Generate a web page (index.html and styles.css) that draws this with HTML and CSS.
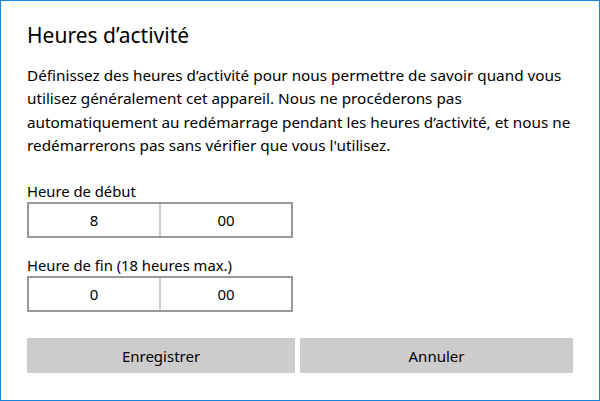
FILE: index.html
```html
<!DOCTYPE html>
<html lang="fr">

<head>
    <meta charset="UTF-8">
    <meta name="viewport" content="width=device-width, initial-scale=1.0">
    <title>Heures d'activité</title>
    <link rel="stylesheet" href="styles.css">
</head>

<body>
    <div class="dialog">
        <h1>Heures d’activité</h1>

        <p class="desc">Définissez des heures d’activité pour nous permettre de savoir quand vous<br>
            utilisez généralement cet appareil. Nous ne procéderons pas<br>
            automatiquement au redémarrage pendant les heures d’activité, et nous ne<br>
            redémarrerons pas sans vérifier que vous l'utilisez.</p>

        <p class="label first">Heure de début</p>
        <div class="time">
            <span>8</span>
            <span>00</span>
        </div>

        <p class="label">Heure de fin (18 heures max.)</p>
        <div class="time">
            <span>0</span>
            <span>00</span>
        </div>

        <div class="actions">
            <button id="save">Enregistrer</button>
            <button id="cancel">Annuler</button>
        </div>
    </div>
</body>

</html>
```

FILE: styles.css
```css
* {
    box-sizing: border-box;
    margin: 0;
    padding: 0;
    font-family: "Noto Sans", "Open Sans", sans-serif;
}

body {
    background-color: #ffffff;
}

.dialog {
    width: 600px;
    height: 401px;
    border: 1px solid #1883d7;
    padding: 19px 26px 0 26px;
    background: white;
    color: #000000;
}

.dialog h1 {
    font-size: 21px;
    font-weight: 400;
    line-height: 30px;
}

.desc {
    margin-top: 14px;
    font-size: 15.3px;
    line-height: 23.3px;
    white-space: nowrap;
}

.label {
    margin-top: 17px;
    font-size: 14.8px;
    line-height: 20px;
}

.label.first {
    margin-top: 24px;
}

.time {
    display: flex;
    width: 266px;
    height: 36px;
    margin-top: 1px;
    border: 2px solid #999999;
}

.time span {
    flex: 1;
    display: flex;
    justify-content: center;
    align-items: center;
    font-size: 15px;
}

.time span + span {
    border-left: 2px solid #cccccc;
}

.actions {
    display: flex;
    gap: 5px;
    margin-top: 26px;
}

.actions button {
    height: 35px;
    border: 0;
    background-color: #cccccc;
    color: #000000;
    font-size: 15px;
}

#save {
    width: 268px;
}

#cancel {
    width: 273px;
}
```
